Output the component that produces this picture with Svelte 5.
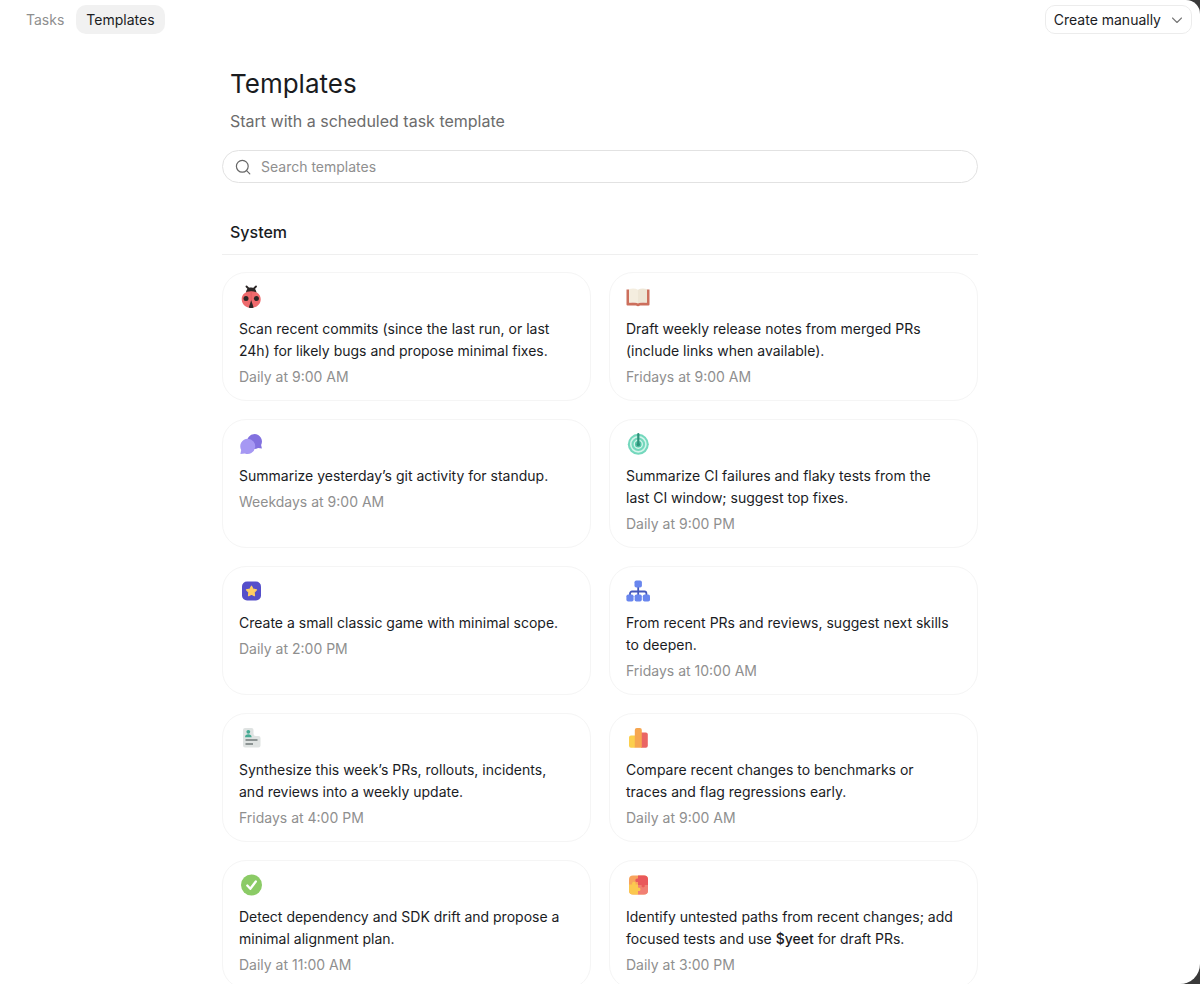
<script>
  let query = $state("");

  const tabs = ["Tasks", "Templates"];
  let activeTab = $state("Templates");

  const templates = [
    {
      icon: "ladybug",
      title: "Scan recent commits (since the last run, or last 24h) for likely bugs and propose minimal fixes.",
      schedule: "Daily at 9:00 AM",
    },
    {
      icon: "book",
      title: "Draft weekly release notes from merged PRs (include links when available).",
      schedule: "Fridays at 9:00 AM",
    },
    {
      icon: "chat",
      title: "Summarize yesterday’s git activity for standup.",
      schedule: "Weekdays at 9:00 AM",
    },
    {
      icon: "radar",
      title: "Summarize CI failures and flaky tests from the last CI window; suggest top fixes.",
      schedule: "Daily at 9:00 PM",
    },
    {
      icon: "star",
      title: "Create a small classic game with minimal scope.",
      schedule: "Daily at 2:00 PM",
    },
    {
      icon: "sitemap",
      title: "From recent PRs and reviews, suggest next skills to deepen.",
      schedule: "Fridays at 10:00 AM",
    },
    {
      icon: "report",
      title: "Synthesize this week’s PRs, rollouts, incidents, and reviews into a weekly update.",
      schedule: "Fridays at 4:00 PM",
    },
    {
      icon: "bars",
      title: "Compare recent changes to benchmarks or traces and flag regressions early.",
      schedule: "Daily at 9:00 AM",
    },
    {
      icon: "check",
      title: "Detect dependency and SDK drift and propose a minimal alignment plan.",
      schedule: "Daily at 11:00 AM",
    },
    {
      icon: "puzzle",
      title: "Identify untested paths from recent changes; add focused tests and use",
      skill: "$yeet",
      rest: "for draft PRs.",
      schedule: "Daily at 3:00 PM",
    },
  ];

  let visible = $derived(
    templates.filter((t) => t.title.toLowerCase().includes(query.toLowerCase()))
  );
</script>

{#snippet icon(name)}
  <svg class="icon" viewBox="0 0 24 24" fill="none" aria-hidden="true">
    {#if name === "ladybug"}
      <path d="M7.500 1.500 9.500 3.500M17 1.500 15 3.500" stroke="#2b2626" stroke-width="1.800" stroke-linecap="round" />
      <path d="M7 8c0-3.500 2-5.500 5.200-5.500s5.200 2 5.200 5.500z" fill="#2b2626" />
      <path d="M12.200 6.300c5.700 0 9.500 3.200 9.500 8 0 5-4.200 8.700-9.500 8.700s-9.500-3.700-9.500-8.700c0-4.800 3.800-8 9.500-8z" fill="#ee6a6d" />
      <circle cx="7" cy="13.500" r="2.500" fill="#2b2626" />
      <circle cx="17.400" cy="13.500" r="2.500" fill="#2b2626" />
      <path d="M12.200 15 14.600 22.500c-1.500.7-3.300.7-4.800 0z" fill="#2b2626" />
      <path d="M12.200 6.500v9" stroke="#d4565a" stroke-width=".6" />
    {:else if name === "book"}
      <path d="M.5 4.500h3v13h17v-13h3v15a1 1 0 0 1-1 1H14q-2 1.500-4 0H1.500a1 1 0 0 1-1-1z" fill="#cc6f5c" />
      <path d="M3 4q5.500-1.500 9 .8V18.500q-4-2-9-.8z" fill="#f4eddf" />
      <path d="M21 4q-5.500-1.500-9 .8V18.500q4-2 9-.8z" fill="#eee6d6" />
    {:else if name === "chat"}
      <path d="M15.500 2a7.500 7.500 0 0 1 6.600 11l.8 3.500-3.800-.4A7.500 7.500 0 1 1 15.500 2z" fill="#8271df" />
      <path d="M8.700 6.700a7.600 7.600 0 1 1-2.800 14.700L1.400 22l.8-4a7.600 7.600 0 0 1 6.500-11.300z" fill="#a698f3" />
    {:else if name === "radar"}
      <circle cx="12.300" cy="12.300" r="10.500" fill="#74d8bd" />
      <circle cx="12.300" cy="12.300" r="7.600" stroke="#d3f5eb" stroke-width="1.600" />
      <circle cx="12.300" cy="12.300" r="4" fill="#52c4a4" stroke="#d3f5eb" stroke-width="1.400" />
      <path d="M12.300 2v10.500" stroke="#2e917a" stroke-width="2.200" stroke-linecap="round" />
      <circle cx="12.300" cy="12.600" r="1.700" fill="#2e917a" />
    {:else if name === "star"}
      <rect x="3" y="2.500" width="19" height="19" rx="5" fill="#554fca" />
      <path d="m12.500 7.200 1.600 3 3.400.6-2.400 2.500.4 3.400-3-1.400-3 1.400.4-3.400-2.400-2.500 3.400-.6z" fill="#ffce63" stroke="#ffce63" stroke-width="1.200" stroke-linejoin="round" />
    {:else if name === "sitemap"}
      <path d="M12.200 8v9M4 17v-2.500a2 2 0 0 1 2-2h12.400a2 2 0 0 1 2 2V17" stroke="#4558bb" stroke-width="1.800" />
      <rect x="8.500" y="1.500" width="7.400" height="7" rx="1.800" fill="#6986ee" />
      <rect x=".4" y="15.500" width="7.200" height="7" rx="1.800" fill="#6986ee" />
      <rect x="8.600" y="15.500" width="7.200" height="7" rx="1.800" fill="#6986ee" />
      <rect x="16.800" y="15.500" width="7.200" height="7" rx="1.800" fill="#6986ee" />
    {:else if name === "report"}
      <path d="M6 2h6.500a2 2 0 0 1 2 2v3.500a2.500 2.500 0 0 0 2.500 2.500h2.500a2 2 0 0 1 2 2v7.500a2 2 0 0 1-2 2H6a2 2 0 0 1-2-2V4a2 2 0 0 1 2-2z" fill="#dfe3e2" />
      <circle cx="9.300" cy="5.800" r="1.900" fill="#45aa93" />
      <path d="M6 11.200c0-3.800 6.600-3.800 6.600 0z" fill="#45aa93" />
      <path d="M6.500 14h12M6.500 18h7.500" stroke="#727b7a" stroke-width="1.500" />
    {:else if name === "bars"}
      <path d="M9 9.500v12.300H5a2 2 0 0 1-2-2v-8.300a2 2 0 0 1 2-2z" fill="#fccf4d" />
      <path d="M15 6.500h4.800a2 2 0 0 1 2 2v11.300a2 2 0 0 1-2 2H15z" fill="#ea6564" />
      <path d="M8.800 4a2 2 0 0 1 2-2h3a2 2 0 0 1 2 2v17.800h-7z" fill="#f6a650" />
    {:else if name === "check"}
      <circle cx="12.500" cy="12" r="10.500" fill="#8bcb66" />
      <path d="m8.300 12.500 3 3.300 5.500-7.300" stroke="#fff" stroke-width="2.300" stroke-linecap="round" stroke-linejoin="round" />
    {:else}
      <rect x="3" y="2.500" width="19" height="19" rx="4" fill="#f8a35c" />
      <path d="M3 11.500h3.200c-1.200-3.700 4.600-3.700 3.400 0H12v3c3.500-1 3.500 4.500 0 3.500v3.500H7a4 4 0 0 1-4-4z" fill="#fbc84f" />
      <path d="M12 2.500h6a4 4 0 0 1 4 4V12h-3.200c1.200 3.700-4.600 3.700-3.400 0H12V9c-3.500 1-3.500-4.500 0-3.500z" fill="#e9585b" />
      <path d="M12 12h3.400c-1.200 3.700 4.600 3.700 3.400 0H22v5.500a4 4 0 0 1-4 4h-6V18c3.500 1 3.500-4.500 0-3.500z" fill="#f17f74" />
    {/if}
  </svg>
{/snippet}

<div class="window">
  <header>
    <nav>
      {#each tabs as tab}
        <button class="tab" class:active={tab === activeTab} onclick={() => (activeTab = tab)}>
          {tab}
        </button>
      {/each}
    </nav>
    <button class="create">
      Create manually
      <svg class="chevron" viewBox="0 0 12 12" fill="none" aria-hidden="true">
        <path d="m1.500 4 4.500 4.500L10.500 4" stroke="#777" stroke-width="1.100" stroke-linecap="round" stroke-linejoin="round" />
      </svg>
    </button>
  </header>

  <main>
    <h1>Templates</h1>
    <p class="intro">Start with a scheduled task template</p>

    <label class="search">
      <svg viewBox="0 0 16 16" fill="none" aria-hidden="true">
        <circle cx="7.300" cy="7.300" r="5.900" stroke="#666" stroke-width="1.200" />
        <path d="m11.600 11.600 3.200 3.200" stroke="#666" stroke-width="1.200" stroke-linecap="round" />
      </svg>
      <input type="text" placeholder="Search templates" aria-label="Search templates" bind:value={query} />
    </label>

    <h2>System</h2>

    <div class="grid">
      {#each visible as template}
        <button class="card">
          {@render icon(template.icon)}
          <span class="title">
            {template.title}
            {#if template.skill}
              <span class="skill">{template.skill}</span> {template.rest}
            {/if}
          </span>
          <span class="schedule">{template.schedule}</span>
        </button>
      {/each}
    </div>
  </main>
</div>

<style>
  :global(body) {
    background: #3a3a3a;
  }

  .window {
    box-sizing: border-box;
    height: 100vh;
    overflow: hidden;
    background: #fff;
    border-radius: 0 14px 20px 0;
    font-family: Inter, "Liberation Sans", sans-serif;
    color: #1a1c1f;
  }

  button,
  input {
    font-family: inherit;
    color: inherit;
  }

  header {
    display: flex;
    justify-content: space-between;
    padding: 5px 8px 0 16px;
  }

  nav {
    display: flex;
    gap: 2px;
  }

  .tab {
    height: 29px;
    padding: 0 10px;
    border: none;
    border-radius: 10px;
    background: none;
    color: #8f8f8f;
    font-size: 14px;
    cursor: pointer;
  }

  .tab.active {
    background: #f1f1f1;
    color: #1a1c1f;
  }

  .create {
    display: flex;
    align-items: center;
    gap: 10px;
    height: 29px;
    padding: 0 8px;
    border: 1px solid #ececec;
    border-radius: 10px;
    background: #fff;
    font-size: 14px;
    cursor: pointer;
  }

  .chevron {
    width: 12px;
    height: 12px;
  }

  main {
    max-width: 756px;
    margin: 0 auto;
    padding: 33px 16px;
  }

  h1 {
    margin: 0;
    padding: 0 8px;
    font-size: 26px;
    line-height: 34px;
    font-weight: 400;
  }

  .intro {
    margin: 8px 0 17px;
    padding: 0 8px;
    font-size: 16px;
    line-height: 24px;
    color: #6c6c6c;
  }

  .search {
    display: flex;
    align-items: center;
    gap: 10px;
    height: 31px;
    padding: 0 12px;
    border: 1px solid #e2e2e2;
    border-radius: 17px;
  }

  .search svg {
    flex: none;
    width: 16px;
    height: 16px;
  }

  .search input {
    flex: 1;
    min-width: 0;
    padding: 0;
    border: none;
    outline: none;
    background: none;
    font-size: 14px;
  }

  .search input::placeholder {
    color: #8f8f8f;
    opacity: 1;
  }

  h2 {
    margin: 37px 0 17px;
    padding: 0 8px 10px;
    border-bottom: 1px solid #efefef;
    font-size: 16px;
    line-height: 24px;
    font-weight: 500;
  }

  .grid {
    display: grid;
    grid-template-columns: 1fr 1fr;
    gap: 18px;
  }

  .card {
    display: flex;
    flex-direction: column;
    align-items: flex-start;
    padding: 12px 20px 12px 16px;
    border: 1px solid #f5f5f5;
    border-radius: 24px;
    background: #fff;
    font-size: 14px;
    line-height: 22px;
    text-align: left;
    cursor: pointer;
  }

  .icon {
    width: 24px;
    height: 24px;
    margin-bottom: 9px;
  }

  .skill {
    font-weight: 500;
  }

  .schedule {
    margin-top: 4px;
    color: #8f8f8f;
  }
</style>
